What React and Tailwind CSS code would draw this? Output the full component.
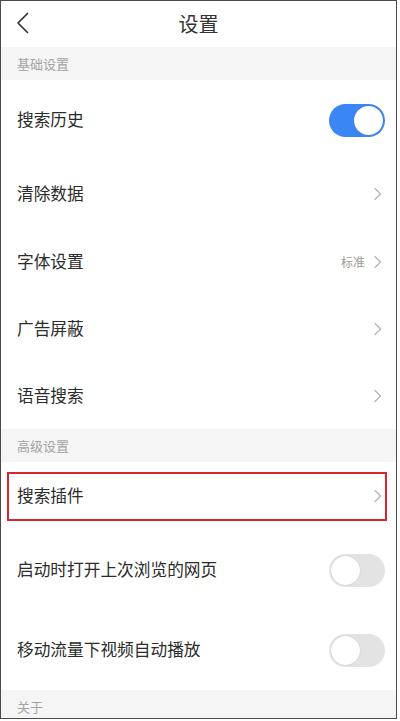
import React from "react";

const font = { fontFamily: '"Noto Sans CJK SC", "Noto Sans", sans-serif' };

function Chevron() {
  return (
    <svg width="9" height="14" viewBox="0 0 9 14" className="shrink-0">
      <path d="M2 1.5 L7.5 7 L2 12.5" fill="none" stroke="#b5b5b5" strokeWidth="1.3" strokeLinecap="round" strokeLinejoin="round" />
    </svg>
  );
}

function Toggle({ on }) {
  return on ? (
    <div className="w-[56px] h-[33px] rounded-full bg-[#3a86f4] flex items-center justify-end pr-[2px]">
      <div className="w-[29px] h-[29px] rounded-full bg-white shadow-[0_0_1px_rgba(0,0,0,0.3)]" />
    </div>
  ) : (
    <div className="w-[56px] h-[33px] rounded-full bg-[#e3e3e3] flex items-center justify-start pl-[2px]">
      <div className="w-[29px] h-[29px] rounded-full bg-white shadow-[0_0_1px_rgba(0,0,0,0.25)]" />
    </div>
  );
}

function Section({ title, h = "h-[33px]" }) {
  return (
    <div className={`${h} shrink-0 bg-[#f5f5f5] flex items-center pl-[16px] text-[13px] text-[#a3a3a3]`}>
      {title}
    </div>
  );
}

function Row({ label, h, right, highlight }) {
  return (
    <div className={`relative ${h} shrink-0 flex items-center justify-between pl-[16px] pr-[14px] bg-white`}>
      <span className="text-[16.7px] text-[#2b2b2b]">{label}</span>
      {right}
      {highlight && (
        <div className="absolute left-[6px] right-[9px] top-[10px] bottom-[9px] border-2 border-[#d8242b]" />
      )}
    </div>
  );
}

export default function App() {
  return (
    <div style={font} className="w-[400px] h-[721px] bg-white">
      <div className="w-[397px] h-[719px] border border-[#4a4a4a] overflow-hidden flex flex-col bg-white">
        <div className="h-[46px] shrink-0 relative flex items-center justify-center">
          <svg width="14" height="22" viewBox="0 0 14 22" className="absolute left-[15px] top-[11px]">
            <path d="M11.5 1.5 L2 11 L11.5 20.5" fill="none" stroke="#333" strokeWidth="1.7" strokeLinecap="round" strokeLinejoin="round" />
          </svg>
          <span className="text-[20px] text-[#333]">设置</span>
        </div>
        <Section title="基础设置" />
        <Row label="搜索历史" h="h-[80px]" right={<div className="mr-[-3px]"><Toggle on /></div>} />
        <Row label="清除数据" h="h-[68px]" right={<Chevron />} />
        <Row
          label="字体设置"
          h="h-[67px]"
          right={
            <div className="flex items-center gap-[8px]">
              <span className="text-[12px] text-[#999]">标准</span>
              <Chevron />
            </div>
          }
        />
        <Row label="广告屏蔽" h="h-[67px]" right={<Chevron />} />
        <Row label="语音搜索" h="h-[67px]" right={<Chevron />} />
        <Section title="高级设置" />
        <Row label="搜索插件" h="h-[68px]" right={<Chevron />} highlight />
        <Row label="启动时打开上次浏览的网页" h="h-[80px]" right={<div className="mr-[-3px]"><Toggle /></div>} />
        <Row label="移动流量下视频自动播放" h="h-[80px]" right={<div className="mr-[-3px]"><Toggle /></div>} />
        <Section title="关于" />
      </div>
    </div>
  );
}
